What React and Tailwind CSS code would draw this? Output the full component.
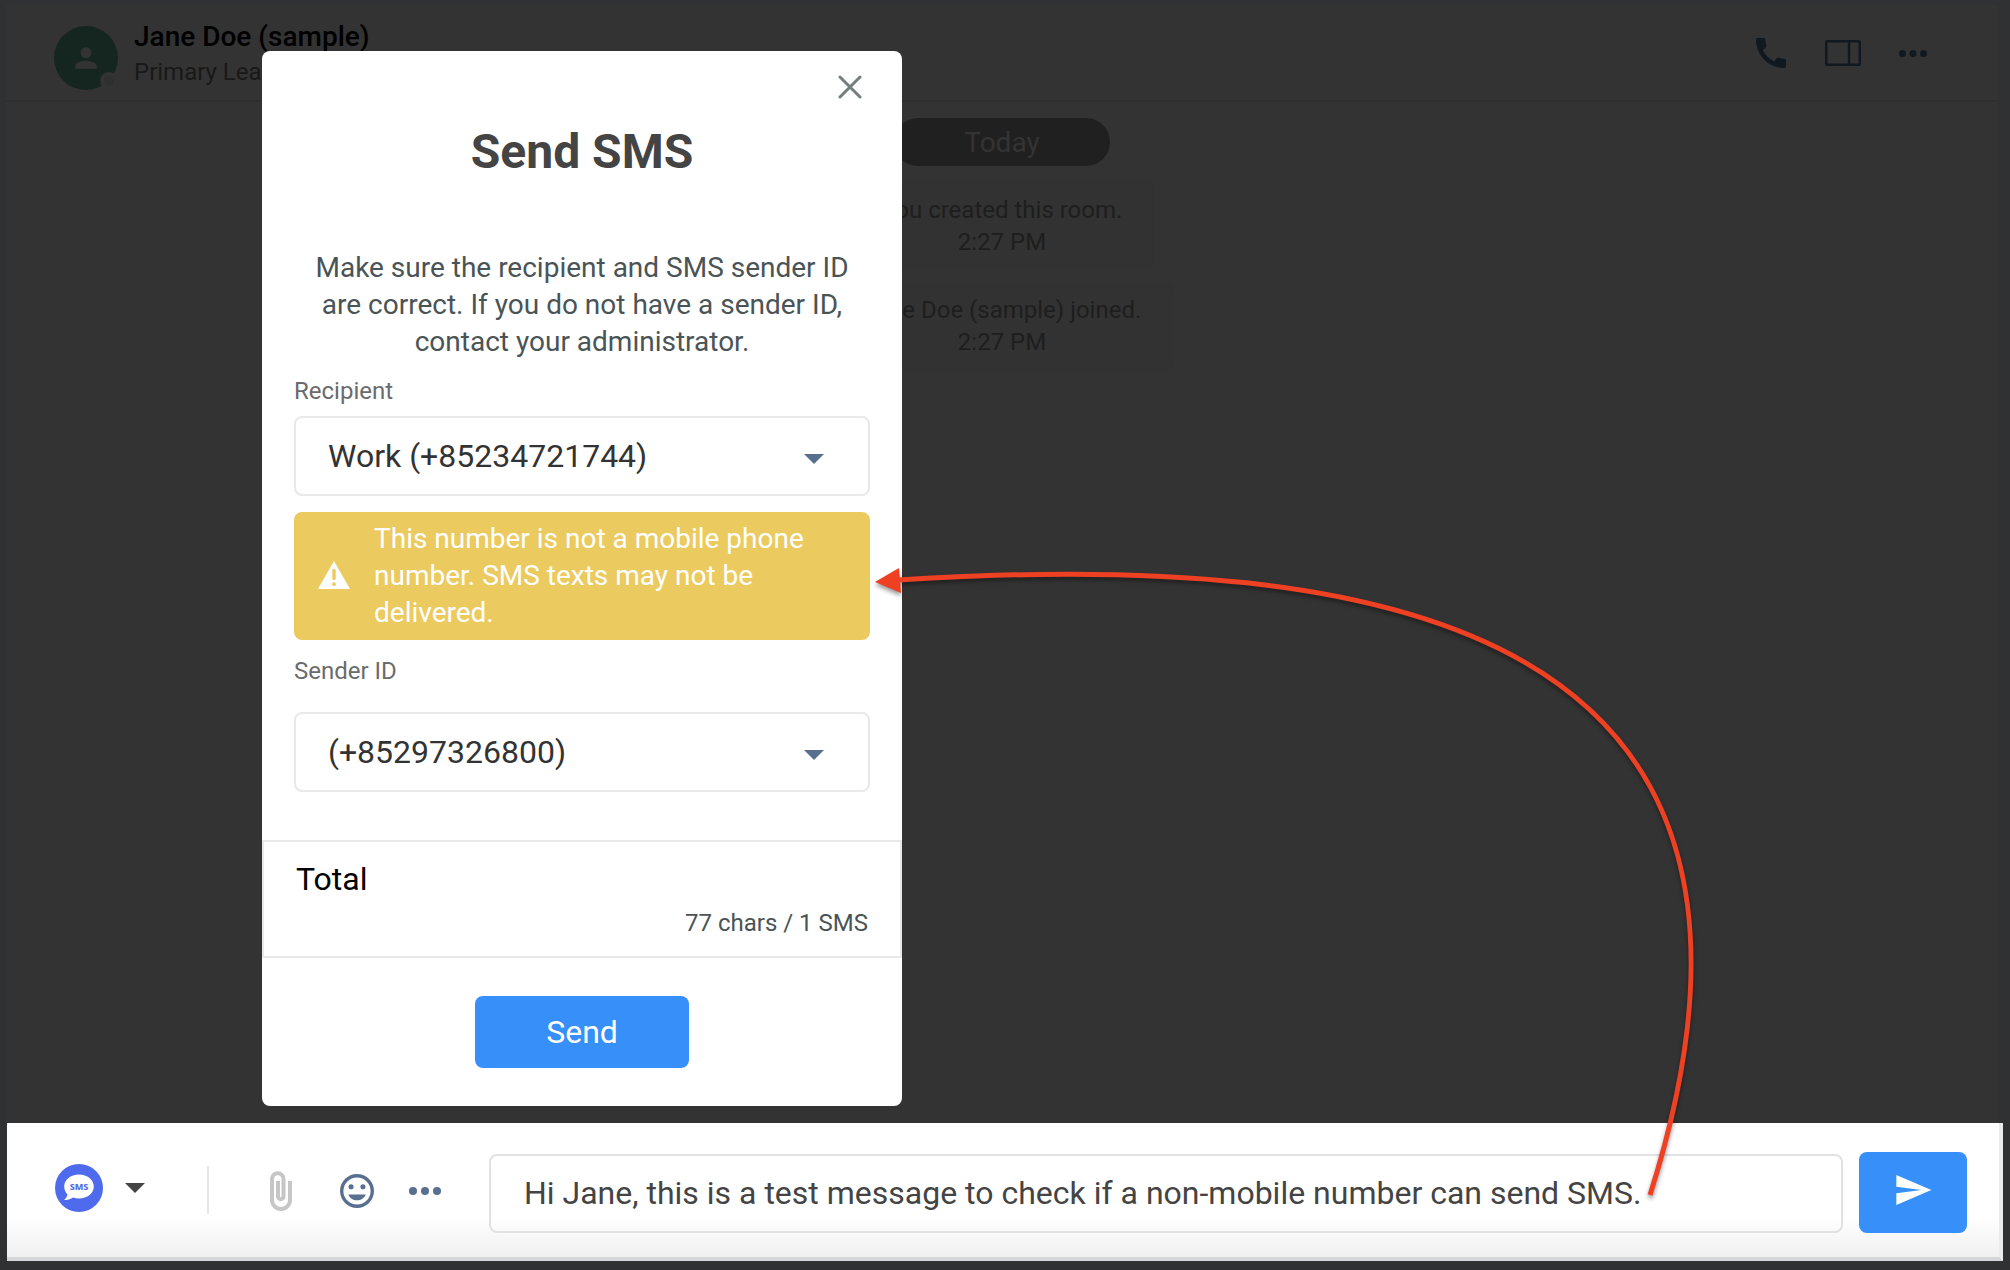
import React, { useState } from "react";
import { MdCall, MdPerson, MdSend } from "react-icons/md";

const MESSAGES = [
  { id: 1, text: "You created this room.", time: "2:27 PM" },
  { id: 2, text: "Jane Doe (sample) joined.", time: "2:27 PM" },
];

const RECIPIENTS = ["Work (+85234721744)"];
const SENDER_IDS = ["(+85297326800)"];

const DotsIcon = ({ className }) => (
  <svg viewBox="0 0 32 8" className={className} fill="currentColor">
    <circle cx="4" cy="4" r="4" />
    <circle cx="16" cy="4" r="4" />
    <circle cx="28" cy="4" r="4" />
  </svg>
);

const CaretIcon = ({ className }) => (
  <svg viewBox="0 0 20 10" className={className} fill="currentColor">
    <path d="M0 0h20L10 10z" />
  </svg>
);

const SidePanelIcon = () => (
  <svg viewBox="0 0 36 26" className="w-9 h-[26px]" fill="none" stroke="currentColor" strokeWidth="2.4">
    <rect x="1.2" y="1.2" width="33.6" height="23.6" rx="1" />
    <path d="M24 1v24" />
  </svg>
);

const CloseIcon = () => (
  <svg viewBox="0 0 24 24" className="size-6" stroke="currentColor" strokeWidth="3" strokeLinecap="round">
    <path d="M2 2l20 20M22 2L2 22" />
  </svg>
);

const WarningIcon = () => (
  <svg viewBox="0 0 32 28" className="w-8 h-7 shrink-0">
    <path d="M16 0l16 28H0z" fill="#fff" />
    <path d="M16 9.5v8" stroke="#ebca60" strokeWidth="3.4" strokeLinecap="round" />
    <circle cx="16" cy="23.2" r="1.9" fill="#ebca60" />
  </svg>
);

const SmsIcon = () => (
  <svg viewBox="0 0 48 48" className="size-12">
    <circle cx="24" cy="24" r="24" fill="#4f6bed" />
    <path
      d="M24 10.5c8.3 0 14.8 5.3 14.8 12s-6.5 12-14.8 12c-2.2 0-4.2-.3-6-.9-2.4 1.7-5.3 2.6-8.9 2.3 1.8-1.6 2.9-3.3 3.4-5.4-2.1-2.1-3.3-4.9-3.3-8 0-6.7 6.5-12 14.8-12z"
      fill="#fff"
    />
    <text
      x="24"
      y="26"
      textAnchor="middle"
      fontSize="9"
      fontWeight="800"
      fontFamily="Noto Sans, sans-serif"
      fill="#4f6bed"
    >
      SMS
    </text>
  </svg>
);

const PaperclipIcon = () => (
  <svg viewBox="0 0 24 42" className="w-6 h-[42px]" fill="none" stroke="currentColor" strokeWidth="4">
    <path d="M21 11V30a9 9 0 0 1-18 0V9a5.75 5.75 0 0 1 11.5 0v17.5a2.75 2.75 0 0 1-5.5 0V11" />
  </svg>
);

const EmojiIcon = () => (
  <svg viewBox="2 2 20 20" className="size-[34px]" fill="currentColor">
    <path d="M12 17.5c2.33 0 4.3-1.46 5.11-3.5H6.89c.8 2.04 2.78 3.5 5.11 3.5M8.5 11A1.5 1.5 0 0 0 10 9.5 1.5 1.5 0 0 0 8.5 8 1.5 1.5 0 0 0 7 9.5 1.5 1.5 0 0 0 8.5 11m7 0A1.5 1.5 0 0 0 17 9.5 1.5 1.5 0 0 0 15.5 8 1.5 1.5 0 0 0 14 9.5a1.5 1.5 0 0 0 1.5 1.5M12 20a8 8 0 0 1-8-8 8 8 0 0 1 8-8 8 8 0 0 1 8 8 8 8 0 0 1-8 8m0-18C6.47 2 2 6.5 2 12a10 10 0 0 0 10 10 10 10 0 0 0 10-10A10 10 0 0 0 12 2z" />
  </svg>
);

// Red pointer from the message to the warning
const Pointer = () => (
  <svg
    viewBox="860 550 860 660"
    className="absolute left-[860px] top-[550px] w-[860px] h-[660px] pointer-events-none drop-shadow-[0_3px_2px_rgba(0,0,0,0.4)]"
  >
    <path
      d="M1650 1195C1831 625 1385 549 898 580"
      fill="none"
      stroke="#ee4023"
      strokeWidth="5"
    />
    <path d="M875 582L899 568L901 593Z" fill="#ee4023" />
  </svg>
);

const SelectField = ({ id, value, options, onChange }) => (
  <div className="relative">
    <select
      id={id}
      value={value}
      onChange={({ target }) => onChange(target.value)}
      className="appearance-none w-full h-20 px-8 text-[32px] text-[#333] bg-white border-2 border-[#e9e9e9] rounded-lg outline-none"
    >
      {options.map((option) => (
        <option key={option} value={option}>
          {option}
        </option>
      ))}
    </select>
    <CaretIcon className="absolute right-[46px] top-[38px] w-5 h-[10px] text-[#586f8f] pointer-events-none" />
  </div>
);

const RoomHeader = () => (
  <header className="flex items-start justify-between h-[97px] pl-12 pr-[71px] border-b-2 border-[#2f2f2f]">
    <div className="flex gap-4">
      <div className="relative mt-[21px] size-16 rounded-full bg-[#14261f] flex items-center justify-center">
        <MdPerson className="size-8 text-[#333]" />
        <span className="absolute right-0 bottom-0 size-[18px] rounded-full bg-[#2f2f2f] border-4 border-[#333]" />
      </div>
      <div className="pt-[14px]">
        <h1 className="text-[28px] leading-9 font-medium text-black">Jane Doe (sample)</h1>
        <p className="text-2xl leading-[34px] text-[#191919]">Primary Lead</p>
      </div>
    </div>

    <div className="flex items-center gap-[34px] pt-7 text-[#101820]">
      <button aria-label="Call">
        <MdCall className="size-10" />
      </button>
      <button aria-label="Toggle side panel">
        <SidePanelIcon />
      </button>
      <button aria-label="More actions" className="ml-1">
        <DotsIcon className="w-7 h-[7px]" />
      </button>
    </div>
  </header>
);

const MessageList = () => (
  <main className="flex-1 flex flex-col items-center pt-4">
    <span className="w-[216px] h-12 rounded-full bg-[#202020] text-center text-[28px] leading-[50px] text-[#333]">
      Today
    </span>
    {MESSAGES.map((message) => (
      <div
        key={message.id}
        className="mt-3 first-of-type:mt-4 px-8 py-3 rounded-lg bg-[#323232] text-center text-2xl leading-8 text-[#1e1e1e]"
      >
        <p>{message.text}</p>
        <p>{message.time}</p>
      </div>
    ))}
  </main>
);

const Composer = () => {
  const [text, setText] = useState(
    "Hi Jane, this is a test message to check if a non-mobile number can send SMS."
  );

  return (
    <footer className="flex items-center mx-[7px] mb-[9px] h-[138px] pl-12 pr-8 pt-1 border-b-4 border-r-4 border-b-[#d5d6d9] border-r-[#eaebef] bg-linear-to-b from-white from-70% to-[#f0f0f0]">
      <button aria-label="Channel: SMS" className="flex items-center gap-[22px] mb-2">
        <SmsIcon />
        <CaretIcon className="w-5 h-[10px] text-[#444]" />
      </button>
      <span className="ml-[62px] mb-1 w-[2px] h-12 bg-[#e6e6e6]" />
      <div className="flex items-center gap-[47px] ml-15 mb-[2px] text-[#586f8f]">
        <button aria-label="Attach file" className="text-[#c6c6c6]">
          <PaperclipIcon />
        </button>
        <button aria-label="Emoji">
          <EmojiIcon />
        </button>
        <button aria-label="More" className="-ml-3">
          <DotsIcon className="w-8 h-2" />
        </button>
      </div>
      <input
        type="text"
        aria-label="Message"
        value={text}
        onChange={({ target }) => setText(target.value)}
        className="flex-1 min-w-0 h-[79px] mt-[2px] ml-12 px-[33px] text-[32px] text-[#444] bg-transparent border-2 border-[#e2e2e2] rounded-lg outline-none"
      />
      <button
        aria-label="Send message"
        className="flex items-center justify-center w-[108px] h-[81px] ml-4 pb-1 rounded-lg bg-[#378ff9] text-white"
      >
        <MdSend className="size-10" />
      </button>
    </footer>
  );
};

const SendSmsModal = () => {
  const [recipient, setRecipient] = useState(RECIPIENTS[0]);
  const [senderId, setSenderId] = useState(SENDER_IDS[0]);

  return (
    <div
      role="dialog"
      aria-labelledby="sms-title"
      className="absolute left-[262px] top-[51px] w-[640px] rounded-lg bg-white"
    >
      <div className="px-8">
        <div className="flex justify-end pt-6 pr-2">
          <button aria-label="Close" className="text-[#71807f]">
            <CloseIcon />
          </button>
        </div>
        <h2 id="sms-title" className="mt-[25px] text-center text-5xl leading-14 font-bold text-[#444]">
          Send SMS
        </h2>
        <p className="mt-[69px] text-center text-[28px] leading-[37px] text-[#4a5456]">
          Make sure the recipient and SMS sender ID are correct. If you do not have a sender ID, contact your
          administrator.
        </p>

        <label htmlFor="recipient" className="block mt-[17px] mb-[11px] text-2xl leading-7 text-[#6b6b6b]">
          Recipient
        </label>
        <SelectField id="recipient" value={recipient} options={RECIPIENTS} onChange={setRecipient} />

        {/* Warning for landline numbers */}
        <div role="alert" className="flex items-center gap-6 mt-4 h-32 px-6 pb-[2px] rounded-lg bg-[#ebca60]">
          <WarningIcon />
          <p className="text-[28px] leading-[37px] text-white">
            This number is not a mobile phone number. SMS texts may not be delivered.
          </p>
        </div>

        <label htmlFor="sender" className="block mt-[17px] mb-[27px] text-2xl leading-7 text-[#6b6b6b]">
          Sender ID
        </label>
        <SelectField id="sender" value={senderId} options={SENDER_IDS} onChange={setSenderId} />
      </div>

      <div className="mt-12 px-8 py-[17px] border-2 border-[#e9e9e9]">
        <p className="text-[32px] leading-10 text-black">Total</p>
        <p className="mt-2 text-right text-2xl leading-8 text-[#4a5456]">77 chars / 1 SMS</p>
      </div>

      <div className="flex justify-center py-[38px]">
        <button className="w-[214px] h-[72px] rounded-lg bg-[#378ff9] text-[32px] text-white">Send</button>
      </div>
    </div>
  );
};

export default function App() {
  return (
    <div className="relative flex flex-col min-h-screen bg-[#2f3132] font-[Roboto,sans-serif]">
      <div className="flex-1 flex flex-col mt-[5px] ml-[6px] mr-3 bg-[#333]">
        <RoomHeader />
        <MessageList />
      </div>
      <Composer />
      <SendSmsModal />
      <Pointer />
    </div>
  );
}
